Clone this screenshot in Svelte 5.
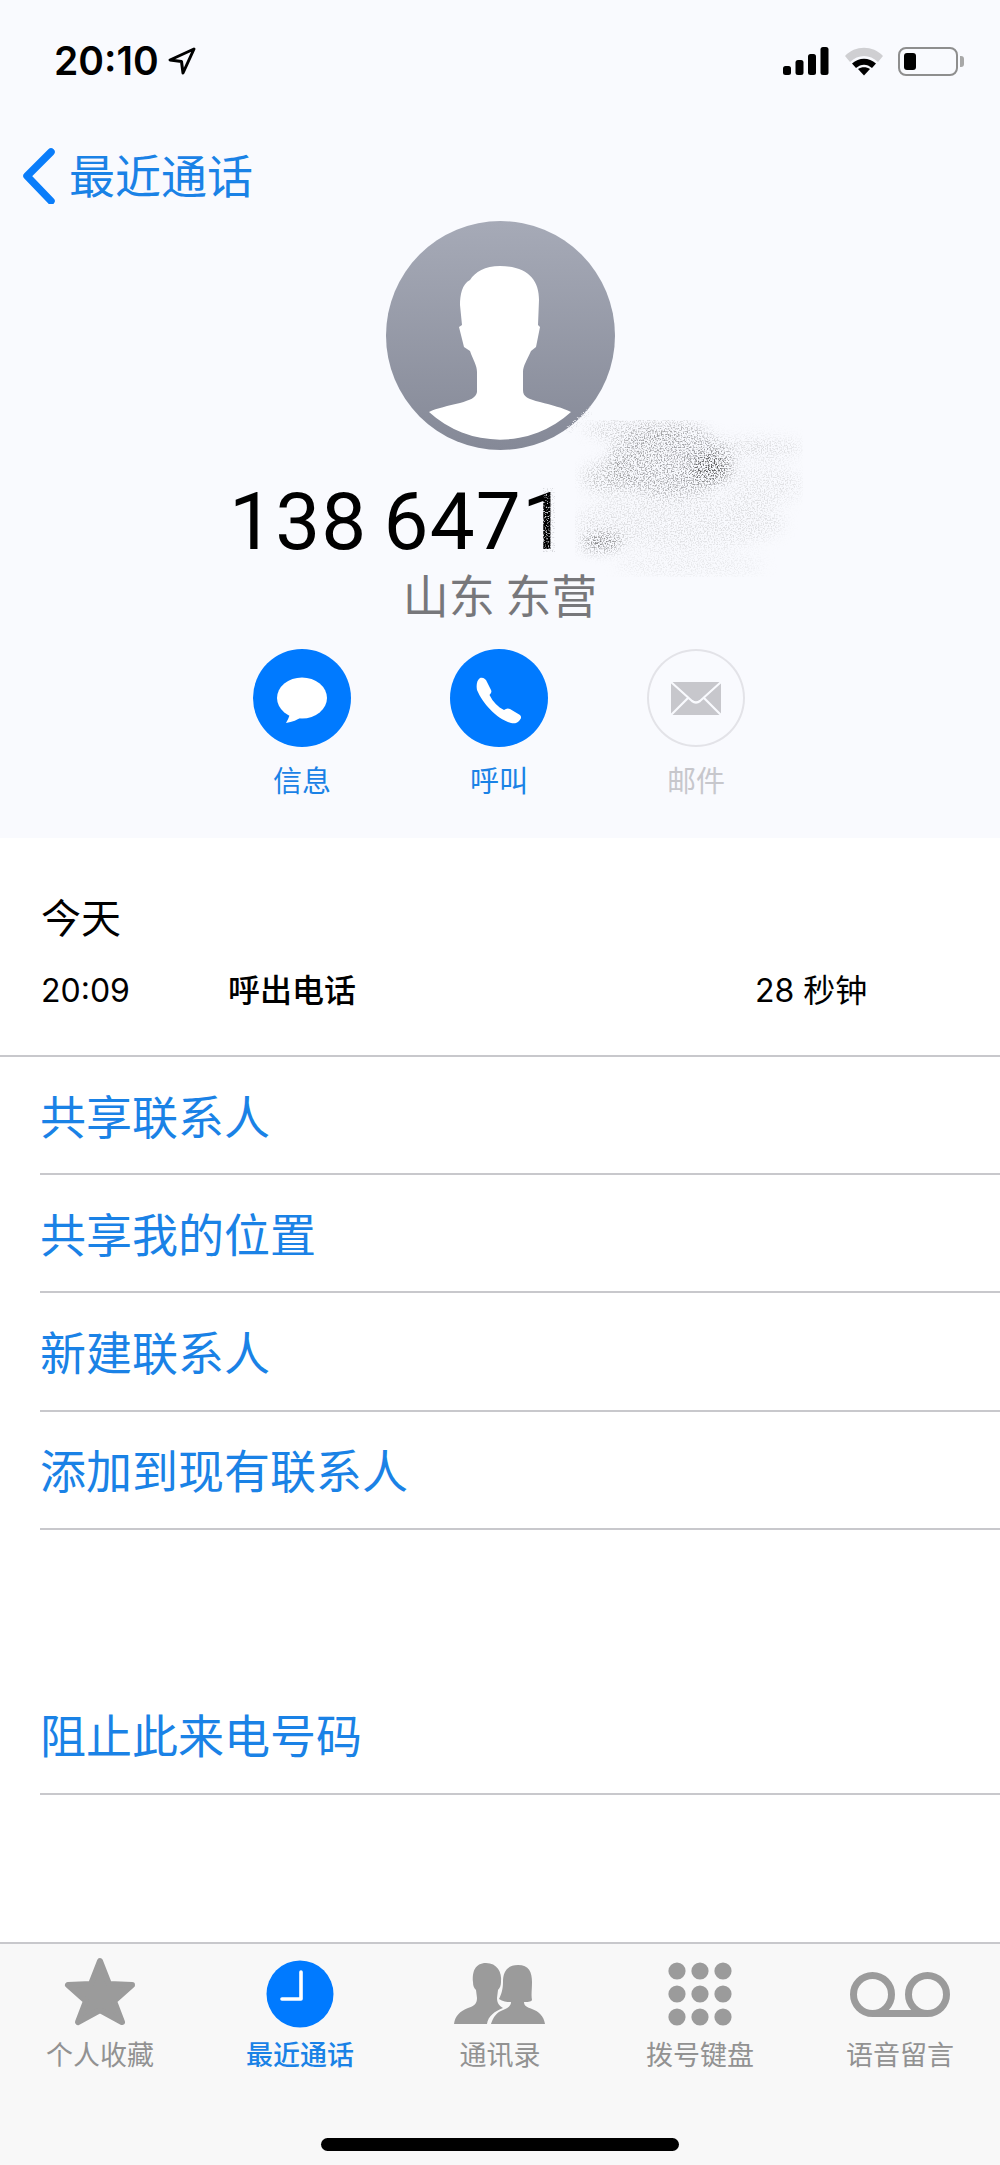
<script>
	const actions = [
		{ label: '信息', kind: 'message' },
		{ label: '呼叫', kind: 'phone' },
		{ label: '邮件', kind: 'mail' }
	];
	const links = ['共享联系人', '共享我的位置', '新建联系人', '添加到现有联系人'];
	const dotXs = [677, 700, 723];
	const dotYs = [1971, 1994, 2017];
</script>

<div class="page">
	<header class="top">
		<div class="status">
			<div class="clock">
				<span>20:10</span>
				<svg class="arrow" viewBox="0 0 30 30" width="30" height="30">
					<path d="M27 3 L3 14 L14.500 15.500 L16 27 Z" fill="none" stroke="#000" stroke-width="3" stroke-linejoin="round" />
				</svg>
			</div>
			<div class="indicators">
				<svg viewBox="0 0 46 30" width="46" height="30">
					<rect x="0" y="20" width="8" height="9" rx="2.5" />
					<rect x="12.500" y="14" width="8" height="15" rx="2.5" />
					<rect x="25" y="8" width="8" height="21" rx="2.5" />
					<rect x="37.500" y="1" width="8" height="28" rx="2.5" />
				</svg>
				<svg viewBox="0 0 38 30" width="38" height="30">
					<path d="M0 10 C10 -1 28 -1 38 10 L33 16 C25 8 13 8 5 16 Z" fill="#cfcfd2" />
					<path d="M7 17.500 C14 11 24 11 31 17.500 L27 22 C22 17.500 16 17.500 11 22 Z" />
					<path d="M13 23 C16.500 20.500 21.500 20.500 25 23 L19 29.500 Z" />
				</svg>
				<div class="battery"><div class="charge"></div></div>
				<div class="nub"></div>
			</div>
		</div>

		<div class="back">
			<svg viewBox="0 0 34 58" width="34" height="58">
				<path d="M29 6 L5 30 L29 55" fill="none" stroke="#0a7dfa" stroke-width="7.5" stroke-linecap="round" stroke-linejoin="round" />
			</svg>
			<span>最近通话</span>
		</div>

		<svg class="avatar" viewBox="386 221 229 229" width="229" height="229">
			<defs>
				<linearGradient id="avatarFill" x1="0" y1="0" x2="0" y2="1">
					<stop offset="0" stop-color="#a6aab7" />
					<stop offset="1" stop-color="#858997" />
				</linearGradient>
			</defs>
			<circle cx="500.500" cy="335.500" r="114.500" fill="url(#avatarFill)" />
			<path
				fill="#fff"
				d="M500 266 C485 266 475 272 470 280 C462 284 460 295 460 305 L462 325 L459 327 L464 347 L470 351 C473 360 477 365 477 372 L477 392 C476 398 470 400 460 403 C448 406 437 408 429 412 A105 105 0 0 0 571 412 C563 408 552 405 540 402 C528 399 523 397 523 390 L523 372 C523 366 527 360 531 351 L536 347 L540 327 L538 325 L539 300 C539 280 528 266 500 266 Z"
			/>
		</svg>

		<div class="number">138 6471</div>
		<div class="region">山东 东营</div>

		<div class="actions">
			{#each actions as action}
				<div class="action" class:off={action.kind === 'mail'}>
					<div class="disc">
						{#if action.kind === 'message'}
							<svg viewBox="0 0 98 98" width="98" height="98">
								<ellipse cx="49" cy="49" rx="25" ry="20.500" fill="#fff" />
								<path d="M37 64 C36 69 34 72 33 74 C39 73 45 71 49 67 Z" fill="#fff" />
							</svg>
						{:else if action.kind === 'phone'}
							<svg viewBox="0 0 98 98" width="98" height="98">
								<path
									fill="#fff"
									d="M30 29 C33 28 36 30 37 33 L41 41 C42 43 41 44 39.500 46 C43 53 48 58 54 61 C56 59.500 58 59 60 60 L70 66 C72 68 71 70 69 72 C67 74.500 64 74.500 61 74 C47 70 33 55 27 41 C26 36 27 31 30 29 Z"
								/>
							</svg>
						{:else}
							<svg viewBox="0 0 98 98" width="98" height="98">
								<rect x="24" y="33" width="50" height="33" fill="#c7c7cc" />
								<path d="M24 33 L45 52 Q49 55 53 52 L74 33 M24 66 L41 49 M74 66 L57 49" fill="none" stroke="#f9fafe" stroke-width="2.2" />
							</svg>
						{/if}
					</div>
					<span>{action.label}</span>
				</div>
			{/each}
		</div>

		<!-- scribbled-out digits: noise masked by soft blobs -->
		<svg class="smudge" viewBox="0 0 290 200" width="290" height="200">
			<defs>
				<filter id="grain" x="0" y="0" width="100%" height="100%">
					<feGaussianBlur in="SourceGraphic" stdDeviation="7" result="soft" />
					<feTurbulence type="fractalNoise" baseFrequency="0.7" numOctaves="2" seed="7" result="noise" />
					<feColorMatrix in="noise" type="matrix" values="0 0 0 0 0 0 0 0 0 0 0 0 0 0 0 0 0 0 4 -1.8" result="speck" />
					<feComposite in="soft" in2="speck" operator="in" />
				</filter>
				<filter id="erase" x="0" y="0" width="100%" height="100%">
					<feTurbulence type="fractalNoise" baseFrequency="0.8" numOctaves="2" seed="3" result="noise" />
					<feColorMatrix in="noise" type="matrix" values="0 0 0 0 0 0 0 0 0 0 0 0 0 0 0 0 0 0 5 -2.6" result="speck" />
					<feComposite in="SourceGraphic" in2="speck" operator="in" />
				</filter>
			</defs>
			<g filter="url(#erase)">
				<rect x="13" y="88" width="12" height="64" fill="#d8d9de" />
				<path d="M33 30 L60 6 L62 14 L40 34 Z" fill="#e4e5ea" />
			</g>
			<g filter="url(#grain)">
				<ellipse cx="140" cy="62" rx="62" ry="34" fill="#55555a" opacity="0.5" />
				<ellipse cx="115" cy="30" rx="60" ry="10" fill="#777" opacity="0.4" />
				<ellipse cx="180" cy="68" rx="20" ry="14" fill="#222" opacity="0.65" />
				<ellipse cx="78" cy="78" rx="26" ry="16" fill="#777" opacity="0.45" />
				<ellipse cx="228" cy="48" rx="45" ry="10" fill="#999" opacity="0.35" />
				<ellipse cx="235" cy="85" rx="38" ry="20" fill="#aaa" opacity="0.3" />
				<ellipse cx="150" cy="122" rx="105" ry="28" fill="#999" opacity="0.28" />
				<ellipse cx="72" cy="142" rx="20" ry="7" fill="#333" opacity="0.85" />
				<ellipse cx="160" cy="165" rx="75" ry="12" fill="#aaa" opacity="0.22" />
			</g>
		</svg>
	</header>

	<main class="body">
		<section class="calls">
			<h2>今天</h2>
			<div class="call">
				<span>20:09</span>
				<strong>呼出电话</strong>
				<span>28 秒钟</span>
			</div>
		</section>

		{#each links as link}
			<div class="link">{link}</div>
		{/each}

		<div class="link block">阻止此来电号码</div>
	</main>

	<nav class="tabs">
		<div class="tab-row">
			<div class="tab">
				<svg viewBox="50 1950 100 84" width="100" height="84">
					<path
						d="M100 1961 L109 1984 L132 1985 L114 2001 L122 2022 L100 2010 L78 2022 L86 2001 L68 1985 L91 1984 Z"
						fill="#9b9b9b"
						stroke="#9b9b9b"
						stroke-width="6"
						stroke-linejoin="round"
					/>
				</svg>
				<span>个人收藏</span>
			</div>
			<div class="tab current">
				<svg viewBox="250 1950 100 84" width="100" height="84">
					<circle cx="300" cy="1994" r="33.500" fill="#007aff" />
					<path d="M301 1972 L301 1999 L282 1999" fill="none" stroke="#fff" stroke-width="3.600" stroke-linecap="round" stroke-linejoin="round" />
				</svg>
				<span>最近通话</span>
			</div>
			<div class="tab">
				<svg viewBox="450 1950 100 84" width="100" height="84">
					<path
						fill="#9b9b9b"
						d="M486 1963 C475 1963 472 1972 473 1982 C473 1986 474 1988 476 1990 L477 1998 C477 2004 474 2006 468 2008 C460 2011 455 2016 454 2024 L487 2024 C488 2016 495 2011 503 2008 C500 2006 497 2004 497 1998 L498 1990 C500 1988 501 1985 501 1982 C502 1972 497 1963 486 1963 Z"
					/>
					<path
						fill="#9b9b9b"
						d="M518 1965 C507 1965 503 1972 503 1982 C503 1990 501 1995 499 1999 C503 2002 508 2002 511 2002 C511 2006 508 2008 503 2010 C497 2012 493 2017 491 2024 L545 2024 C544 2016 538 2011 532 2009 C527 2007 524 2006 524 2002 C527 2002 531 2002 532 2000 C531 1995 532 1990 532 1982 C532 1972 529 1965 518 1965 Z"
					/>
				</svg>
				<span>通讯录</span>
			</div>
			<div class="tab">
				<svg viewBox="650 1950 100 84" width="100" height="84">
					{#each dotYs as y}
						{#each dotXs as x}
							<circle cx={x} cy={y} r="8.600" fill="#9b9b9b" />
						{/each}
					{/each}
				</svg>
				<span>拨号键盘</span>
			</div>
			<div class="tab">
				<svg viewBox="850 1950 100 84" width="100" height="84">
					<circle cx="872.500" cy="1994.500" r="19" fill="none" stroke="#9b9b9b" stroke-width="7" />
					<circle cx="927.500" cy="1994.500" r="19" fill="none" stroke="#9b9b9b" stroke-width="7" />
					<path d="M872.500 2013.500 L927.500 2013.500" stroke="#9b9b9b" stroke-width="7" />
				</svg>
				<span>语音留言</span>
			</div>
		</div>
		<div class="home"></div>
	</nav>
</div>

<style>
	:global(body) {
		margin: 0;
	}

	.page {
		width: 1000px;
		height: 2165px;
		display: flex;
		flex-direction: column;
		background: #fff;
		font-family: 'Noto Sans CJK SC', sans-serif;
		overflow: hidden;
	}

	.top {
		position: relative;
		height: 838px;
		background: #f9fafe;
		display: flex;
		flex-direction: column;
		align-items: center;
	}

	.status {
		align-self: stretch;
		height: 76px;
		padding: 42px 36px 0 54px;
		box-sizing: border-box;
		display: flex;
		justify-content: space-between;
		align-items: flex-start;
	}

	.clock {
		display: flex;
		align-items: center;
		gap: 8px;
		font: 600 39px/38px Inter, sans-serif;
		color: #000;
	}

	.indicators {
		display: flex;
		align-items: center;
		margin-top: 4px;
	}

	.indicators svg + svg {
		margin-left: 16px;
	}

	.battery {
		width: 60px;
		height: 29px;
		margin-left: 15px;
		padding: 4px;
		box-sizing: border-box;
		border: 2px solid #8e8e8e;
		border-radius: 8px;
	}

	.charge {
		width: 12px;
		height: 100%;
		background: #000;
		border-radius: 3px;
	}

	.nub {
		width: 4px;
		height: 11px;
		margin-left: 2px;
		background: #a8a8a8;
		border-radius: 0 3px 3px 0;
	}

	.back {
		align-self: flex-start;
		display: flex;
		align-items: center;
		gap: 13px;
		height: 58px;
		margin: 70px 0 0 22px;
		font-size: 46px;
		line-height: 54px;
		color: #1a82e6;
	}

	.back span {
		margin-bottom: 4px;
	}

	.avatar {
		margin-top: 17px;
	}

	.number {
		align-self: flex-start;
		margin: 27px 0 0 229px;
		font: 400 80px/90px Roboto, sans-serif;
		letter-spacing: 1.2px;
		word-spacing: -5px;
		color: #000;
	}

	.region {
		font-size: 46px;
		line-height: 52px;
		color: #77777b;
	}

	.actions {
		display: flex;
		margin: 30px 2px 0 0;
	}

	.action {
		width: 197px;
		display: flex;
		flex-direction: column;
		align-items: center;
		gap: 11px;
		font-size: 29px;
		line-height: 42px;
		color: #1a82e6;
	}

	.action.off {
		color: #c7c7cc;
	}

	.disc {
		width: 98px;
		height: 98px;
		border-radius: 50%;
		background: #007aff;
	}

	.disc svg {
		display: block;
	}

	.off .disc {
		background: none;
		box-shadow: inset 0 0 0 2px #e3e3e8;
	}

	.smudge {
		position: absolute;
		left: 530px;
		top: 400px;
		pointer-events: none;
	}

	.body {
		flex: 1;
	}

	.calls {
		height: 219px;
		padding: 51px 0 0 41px;
		box-sizing: border-box;
		border-bottom: 2px solid #c8c8cc;
	}

	h2 {
		margin: 0;
		font-size: 40px;
		font-weight: 400;
		line-height: 54px;
		color: #000;
	}

	.call {
		display: grid;
		grid-template-columns: 187px 527px 1fr;
		margin-top: 21px;
		font-size: 32px;
		line-height: 46px;
		color: #000;
	}

	.call span {
		padding-top: 4px;
		font-family: Inter, 'Noto Sans CJK SC', sans-serif;
	}

	.call strong {
		padding-top: 1px;
		font-weight: 500;
		font-size: 32px;
	}

	.link {
		height: 118.2px;
		margin-left: 40px;
		padding-bottom: 3px;
		box-sizing: border-box;
		display: flex;
		align-items: center;
		font-size: 46px;
		color: #1a82e6;
		border-bottom: 2px solid #c8c8cc;
	}

	.link.block {
		margin-top: 147px;
	}

	.tabs {
		height: 223px;
		box-sizing: border-box;
		background: #f8f8f8;
		border-top: 2px solid #c8c8cc;
		display: flex;
		flex-direction: column;
	}

	.tab-row {
		display: grid;
		grid-template-columns: repeat(5, 200px);
		padding-top: 6px;
	}

	.tab {
		display: flex;
		flex-direction: column;
		align-items: center;
		font-size: 27px;
		line-height: 38px;
		color: #929292;
	}

	.tab span {
		margin-top: 1px;
	}

	.tab svg {
		display: block;
	}

	.tab.current {
		color: #1a82e6;
		font-weight: 500;
	}

	.home {
		width: 358px;
		height: 13px;
		margin: 65px auto 0;
		background: #000;
		border-radius: 7px;
	}
</style>
